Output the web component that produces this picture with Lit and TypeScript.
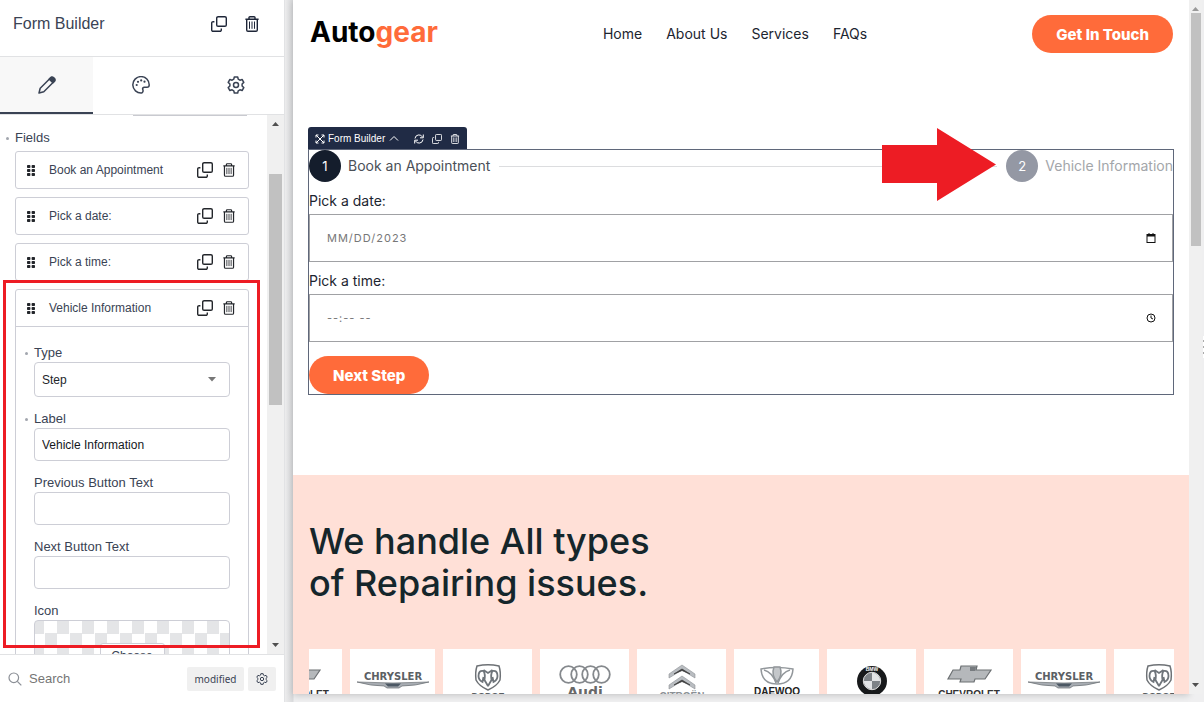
import { LitElement, html, css, svg } from "lit";
import { customElement } from "lit/decorators.js";

const copyIcon = html`<svg class="copy" viewBox="0 0 16 16" fill="none" stroke="currentColor" stroke-width="1.4" stroke-linejoin="round"><rect x="5.7" y=".7" width="9.6" height="9.6" rx="1.4"/><path d="M3.4 5.7H2.1A1.4 1.4 0 0 0 .7 7.1v6.8a1.4 1.4 0 0 0 1.4 1.4h6.8a1.4 1.4 0 0 0 1.4-1.4v-1.3"/></svg>`;
const trashIcon = html`<svg class="trash" viewBox="0 0 14 16" fill="none" stroke="currentColor" stroke-width="1.4"><path d="M.4 3.2h13.2M4 3V1.6A.9.9 0 0 1 4.9.7h4.2a.9.9 0 0 1 .9.9V3M1.7 3.4V14a1.3 1.3 0 0 0 1.3 1.3h8a1.3 1.3 0 0 0 1.3-1.3V3.4"/><path stroke-width="1" d="M4.5 5.5v7.3M7 5.5v7.3M9.5 5.5v7.3"/></svg>`;
const gearIcon = html`<svg class="gear" viewBox="0 0 18 18" fill="none" stroke="currentColor" stroke-width="1.5" stroke-linejoin="round"><path d="M7.3 1h3.4l.5 2.2 1.7 1 2.2-.7 1.7 2.9-1.7 1.6v2l1.7 1.6-1.7 2.9-2.2-.7-1.7 1-.5 2.2H7.3l-.5-2.2-1.7-1-2.2.7-1.7-2.9L2.9 10V8L1.2 6.4l1.7-2.9 2.2.7 1.7-1z"/><circle cx="9" cy="9" r="2.5"/></svg>`;

const logos: Record<string, unknown> = {
  chrysler: svg`<text x="44" y="31" font-size="10" font-weight="700" text-anchor="middle" class="wide">CHRYSLER</text><path d="M8 33q36 2 72 0-14 4-27 4l-3 2H38l-3-2Q22 37 8 33z" fill="#a8adb3" stroke="#666b70" stroke-width=".7"/><path d="M36 34.5h16l-3 3H39z" fill="#4c5864"/>`,
  dodge: svg`<path d="M33 17q11-2.500 22 0 2 6 1 14-3 6-12 10-9-4-12-10-1-8 1-14z" fill="none" stroke="#6d7175" stroke-width="1.500"/><path d="M44 37l-3.500-6q1-6-1-9-5-1-5 5 0 4 4 6l1-5m4.500 9l3.500-6q-1-6 1-9 5-1 5 5 0 4-4 6l-1-5M39.500 21l4.500 3 4.500-3" fill="none" stroke="#6f757b" stroke-width="1.800"/><text x="44" y="50" text-anchor="middle" font-size="9" font-weight="700">DODGE</text>`,
  audi: svg`<g fill="none" stroke="#85898d" stroke-width="1.800"><circle cx="27.500" cy="25.500" r="8.300"/><circle cx="38.500" cy="25.500" r="8.300"/><circle cx="49.500" cy="25.500" r="8.300"/><circle cx="60.500" cy="25.500" r="8.300"/></g><text x="44" y="48" text-anchor="middle" font-size="14" font-weight="700" class="wide" fill="#686868">Audi</text>`,
  citroen: svg`<path d="M31 29v-4l13-9 13 9v4l-13-8zM31 40v-4l13-9 13 9v4l-13-8z" fill="#b9bdc1" stroke="#8d9196" stroke-width=".6"/><path d="M36 25l8-5 8 5-8-3.500zM36 36l8-5 8 5-8-3.500z" fill="#333" stroke="#444" stroke-width=".8"/><text x="44" y="51" text-anchor="middle" font-size="10" font-weight="700" class="soft">CITROËN</text>`,
  daewoo: svg`<g fill="none" stroke="#92979b" stroke-width="1.500"><path d="M28 20q16-3 32 0-1 15-16 15T28 20z"/><path d="M31 21q8 2 12 13M57 21q-8 2-12 13"/><path d="M41 18q-3 8 3 15 6-7 3-15z" fill="#c4c7ca"/></g><text x="44" y="46" text-anchor="middle" font-size="10" font-weight="700" fill="#222">DAEWOO</text>`,
  bmw: svg`<circle cx="44" cy="32" r="15" fill="#17191b"/><circle cx="44" cy="32" r="8.700" fill="#7d8287" stroke="#ddd"/><path d="M44 32v-8.200a8.200 8.200 0 0 1 8.200 8.200zM44 32v8.200a8.200 8.200 0 0 1-8.200-8.200z" fill="#e2e4e6"/><text x="44" y="22" text-anchor="middle" font-size="5" font-weight="700" fill="#fff">BMW</text>`,
  chevrolet: svg`<path d="M36 17h16l-1 4h15l-6 9H50l-1 3H35l1-3H23l5-9h7z" fill="#b5b8bb" stroke="#6c7073" stroke-width="1.200"/><path d="M45 18h6l-1 4h-5z" fill="#777b7f"/><text x="44" y="49" text-anchor="middle" font-size="10" font-weight="700" fill="#333">CHEVROLET</text>`,
};

@customElement("app-root")
export class AppRoot extends LitElement {
  static styles = css`
    * { box-sizing: border-box; }
    :host { display: flex; position: relative; height: 100vh; overflow: hidden; background: #efeff0; font-family: "Liberation Sans", Arial, sans-serif; color: #3a4354; }
    svg { display: block; flex: none; }
    button { font: inherit; color: inherit; border: 0; background: none; padding: 0; cursor: pointer; }
    input, select { font: inherit; }
    h1, h2, ul { margin: 0; padding: 0; font-weight: 400; list-style: none; }
    .copy { width: 16px; height: 16px; }
    .trash { width: 14px; height: 16px; }
    .gear { width: 18px; height: 18px; }

    .sidebar { flex: none; width: 285px; display: flex; flex-direction: column; background: #fff; border-right: 1px solid #e2e3e5; }
    .title { flex: none; height: 57px; display: flex; align-items: center; gap: 18px; padding: 0 25px 8px 13px; border-bottom: 1px solid #e1e2e4; color: #1e2638; }
    .title h1 { flex: 1; font-size: 16px; line-height: 20px; color: #3a4354; }
    .tabs { flex: none; display: grid; grid-template-columns: 93px 1fr 1fr; height: 58px; border-bottom: 1px solid #e1e2e4; }
    .tab { display: grid; place-items: center; border-bottom: 2px solid transparent; }
    .tab.on { background: #f8f8f8; border-bottom-color: #3a4354; }
    .scroller { flex: 1; min-height: 0; display: flex; }
    .fields { flex: 1; min-width: 0; overflow: hidden; padding: 0 18px 0 15px; }
    .above { width: 114px; height: 1px; margin-left: 118px; background: #c9cad0; }
    .dotted::before { content: ""; position: absolute; left: -9px; top: 7px; width: 3px; height: 3px; border-radius: 50%; background: #a2a6ae; }
    .label { display: block; position: relative; font-size: 13px; line-height: 16px; }
    .fields h2 { margin: 14px 0 5px; }
    .cards { display: flex; flex-direction: column; gap: 8px; }
    .card { border: 1px solid #cdced6; border-radius: 3px; }
    .head { height: 36px; display: flex; align-items: center; padding: 0 13px 0 11px; font-size: 12px; color: #23262b; }
    .grip { width: 8px; height: 11px; }
    .name { flex: 1; margin-left: 14px; color: #3a4354; }
    .head .trash { width: 12px; height: 14px; }
    .head button + button { margin-left: 10px; }
    .body { border-top: 1px solid #cdced6; padding: 18px 18px 0; }
    .body .label { margin-bottom: 1px; }
    .control { display: block; width: 100%; height: 33px; margin-bottom: 14px; padding: 0 7px; border: 1px solid #cdced6; border-radius: 4px; background: #fff; font-size: 12px; color: #15171c; outline: 0; }
    .pick { position: relative; margin-bottom: 14px; }
    .pick .control { height: 35px; margin: 0; appearance: none; color: #23262b; }
    .caret { position: absolute; right: 14px; top: 15px; width: 8px; height: 5px; color: #777; pointer-events: none; }
    .checker { height: 80px; display: flex; justify-content: center; align-items: flex-start; padding-top: 22px; border: 1px solid #cdced6; border-radius: 4px; background: conic-gradient(#fff 25%, #e4e5e7 0 50%, #fff 0 75%, #e4e5e7 0) -3px 0 / 25px 25px; }
    .choose { width: 65px; height: 26px; border: 1px solid #cdced6; border-radius: 3px; background: #fff; font-size: 12px; }
    .bar { flex: none; display: flex; flex-direction: column; background: #f0f0f0; color: #505050; align-items: center; }
    .side { width: 17px; }
    .bar svg { width: 7px; height: 4px; margin: 7px 0; }
    .thumb { width: 13px; background: #c1c1c1; }
    .side .thumb { height: 231px; margin: 41px 0 auto; }
    .search { flex: none; height: 48px; display: flex; align-items: center; gap: 4px; padding: 0 8px; border-top: 1px solid #e1e2e4; font-size: 13px; }
    .search input { flex: 1; min-width: 0; border: 0; outline: 0; padding: 0 0 0 3px; }
    .search input::placeholder { color: #757575; }
    .search > svg { width: 14px; height: 14px; color: #8b8f96; }
    .chip { height: 24px; background: #f0f0f0; border-radius: 2px; font: 10px "Noto Sans", sans-serif; width: 57px; }
    .chip.sq { width: 28px; display: grid; place-items: center; }
    .chip .gear { width: 12px; height: 12px; }

    .stage { flex: 1; min-width: 0; display: flex; padding: 0 2px 8px 8px; background: linear-gradient(90deg, #ececed, #d9dadc 8px, #efeff0 9px); }
    .page { flex: 1; min-width: 0; background: #fff; overflow: hidden; font-family: Inter, "Open Sans", sans-serif; color: #1c2530; box-shadow: 0 1px 7px #0003; }
    .view { width: 13px; }
    .view .thumb { width: 10px; height: 233px; margin: -5px 0 auto; }
    .view svg:first-child { color: #999; }
    .nav { display: flex; align-items: center; justify-content: space-between; padding: 15px 16px 0 17px; height: 53px; }
    .brand { font-size: 28px; line-height: 32px; font-weight: 700; color: #000; text-decoration: none; margin-bottom: 4px; }
    .brand span { color: #ff6b3a; }
    .links { display: flex; gap: 24px; font-size: 14px; line-height: 16px; }
    .links a { color: inherit; text-decoration: none; }
    .cta { height: 38px; border-radius: 19px; padding: 0 24px; background: #ff6b3a; color: #fff; font-size: 15px; font-weight: 800; }
    .builder { margin: 74px 15px 80px; }
    .tools { width: 159px; height: 22px; display: flex; align-items: center; padding: 1px 7px 0; background: #202b45; color: #fff; border-radius: 3px 3px 0 0; font: 10px "Liberation Sans", sans-serif; }
    .tools svg { height: 10px; width: 10px; }
    .tools span { margin: 0 4px 0 3px; white-space: nowrap; }
    .tools button { margin-left: 8px; }
    .tools button:first-of-type { margin-left: 15px; }
    .form { border: 1px solid #5f677a; }
    .steps { display: flex; align-items: center; height: 32px; font-size: 14px; line-height: 16px; white-space: nowrap; color: #4b5058; }
    .num { flex: none; display: grid; place-items: center; width: 32px; height: 32px; border-radius: 50%; margin-right: 7px; background: #141d2c; color: #fff; font-size: 13px; }
    .rule { flex: 1; height: 1px; margin: 0 9px; background: #dcdddf; }
    .off { color: #a3a6aa; }
    .num.off { background: #9498a4; color: #fff; }
    .form > label { display: block; font-size: 14px; line-height: 16px; margin: 11px 0 5px; }
    .entry { display: flex; align-items: center; height: 48px; padding: 0 16px 0 17px; border: 1px solid #a0a1a4; }
    .entry input { flex: 1; min-width: 0; border: 0; outline: 0; padding: 0; background: none; font-size: 11px; letter-spacing: 1px; }
    .entry input::placeholder { color: #777; }
    .entry svg { width: 10px; height: 10px; color: #111; }
    .next { display: block; margin-top: 14px; }
    .promo { background: #ffe0d7; padding: 45px 15px 0 16px; }
    .promo h2 { font-size: 36px; line-height: 42px; font-weight: 500; color: #15262b; }
    .strip { display: flex; gap: 8px; margin-top: 45px; overflow: hidden; }
    .tile { flex: none; width: 89px; height: 88px; background: #fff; display: grid; place-items: center; }
    .tile:first-child { margin-left: -56px; }
    .tile.slim { width: 85px; }
    .tile svg { width: 88px; height: 88px; margin: 0 -2px; fill: #5b6064; font-family: "Liberation Sans", sans-serif; }
    .tile .soft { fill: #8b9095; }
    .tile .wide { font-family: "DejaVu Sans", sans-serif; }

    .frame { position: absolute; left: 3px; top: 280px; width: 257px; height: 368px; border: 3px solid #ed1c24; pointer-events: none; }
    .arrow { position: absolute; left: 882px; top: 128px; width: 114px; height: 73px; pointer-events: none; }
    .handle { position: absolute; right: 0; top: 336px; width: 1px; height: 22px; background: repeating-linear-gradient(#fff 0 4px, #aaa 4px 6px); }
  `;

  private card(name: string, body: unknown = "") {
    return html`<li class="card">
      <div class="head">
        <svg class="grip" viewBox="0 0 8 11" fill="currentColor"><rect width="3.4" height="3" rx=".8"/><rect x="4.6" width="3.4" height="3" rx=".8"/><rect y="4" width="3.4" height="3" rx=".8"/><rect x="4.6" y="4" width="3.4" height="3" rx=".8"/><rect y="8" width="3.4" height="3" rx=".8"/><rect x="4.6" y="8" width="3.4" height="3" rx=".8"/></svg>
        <span class="name">${name}</span>
        <button aria-label="Duplicate">${copyIcon}</button><button aria-label="Delete">${trashIcon}</button>
      </div>${body}
    </li>`;
  }

  private up = html`<svg viewBox="0 0 7 4" fill="currentColor"><path d="M0 4l3.500-4L7 4z"/></svg>`;
  private down = html`<svg viewBox="0 0 7 4" fill="currentColor"><path d="M0 0l3.500 4L7 0z"/></svg>`;

  render() {
    const brands = ["chevrolet", "chrysler", "dodge", "audi", "citroen", "daewoo", "bmw", "chevrolet", "chrysler", "dodge"];
    const slim = ["chrysler", "daewoo"];
    return html`
      <aside class="sidebar">
        <header class="title"><h1>Form Builder</h1><button aria-label="Duplicate">${copyIcon}</button><button aria-label="Delete">${trashIcon}</button></header>
        <nav class="tabs">
          <button class="tab on" aria-label="Content"><svg width="18" height="18" viewBox="0 0 18 18" fill="none" stroke="currentColor" stroke-width="1.5" stroke-linejoin="round"><path d="M1 17l1.200-4.800L12.700 1.700a1.700 1.700 0 0 1 2.400 0l1.200 1.200a1.700 1.700 0 0 1 0 2.400L5.800 15.800z"/><path fill="currentColor" d="M11.300 3.100l1.900-1.700h2l1.500 1.500v2l-1.800 1.800z"/></svg></button>
          <button class="tab" aria-label="Style"><svg width="18" height="18" viewBox="0 0 18 18" fill="none" stroke="currentColor" stroke-width="1.5"><path d="M9.500 17A8.200 8.200 0 1 1 17.200 9c0 1.700-.9 2.300-2.200 2.300h-2.600c-1.500 0-2.100 1.100-1.600 2.300.6 1.600 0 3.300-1.300 3.400z"/><g fill="currentColor" stroke="none"><circle cx="4.700" cy="9" r="1.100"/><circle cx="6" cy="5.800" r="1.100"/><circle cx="9.200" cy="4.400" r="1.100"/><circle cx="12.500" cy="5.700" r="1.100"/></g></svg></button>
          <button class="tab" aria-label="Settings">${gearIcon}</button>
        </nav>
        <div class="scroller">
          <div class="fields">
            <div class="above"></div>
            <h2 class="label dotted">Fields</h2>
            <ul class="cards">
              ${this.card("Book an Appointment")}${this.card("Pick a date:")}${this.card("Pick a time:")}
              ${this.card("Vehicle Information", html`<div class="body">
                <label class="label dotted" for="type">Type</label>
                <div class="pick"><select class="control" id="type"><option>Step</option></select><svg class="caret" viewBox="0 0 8 5" fill="currentColor"><path d="M0 0h8L4 4.500z"/></svg></div>
                <label class="label dotted" for="lab">Label</label>
                <input class="control" id="lab" .value=${"Vehicle Information"}>
                <label class="label" for="prev">Previous Button Text</label>
                <input class="control" id="prev">
                <label class="label" for="next">Next Button Text</label>
                <input class="control" id="next">
                <div class="label">Icon</div>
                <div class="checker"><button class="choose">Choose</button></div>
              </div>`)}
            </ul>
          </div>
          <div class="bar side">${this.up}<div class="thumb"></div>${this.down}</div>
        </div>
        <footer class="search">
          <svg viewBox="0 0 14 14" fill="none" stroke="currentColor" stroke-width="1.2"><circle cx="5.800" cy="5.800" r="4.800"/><path d="M9.300 9.300L13.300 13.300"/></svg>
          <input aria-label="Search" placeholder="Search">
          <button class="chip">modified</button><button class="chip sq" aria-label="Settings">${gearIcon}</button>
        </footer>
      </aside>
      <div class="stage">
        <main class="page">
          <header class="nav">
            <a class="brand" href="#">Auto<span>gear</span></a>
            <nav class="links">${["Home", "About Us", "Services", "FAQs"].map((l) => html`<a href="#">${l}</a>`)}</nav>
            <button class="cta">Get In Touch</button>
          </header>
          <section class="builder">
            <div class="tools">
              <svg viewBox="0 0 10 10" fill="none" stroke="currentColor"><path d="M1 3.500V1h2.500M6.500 1H9v2.500M9 6.500V9H6.500M3.500 9H1V6.500M1 1l8 8M9 1L1 9"/></svg>
              <span>Form Builder</span>
              <svg viewBox="0 0 10 10" fill="none" stroke="currentColor"><path d="M1 6.500L5 2.500 9 6.500"/></svg>
              <button aria-label="Refresh"><svg viewBox="0 0 10 10" fill="none" stroke="currentColor"><path d="M1 4.500A4 4 0 0 1 8.500 3M9.300.5v3.300H6M9 5.500A4 4 0 0 1 1.500 7M.7 9.500V6.200H4"/></svg></button>
              <button aria-label="Duplicate">${copyIcon}</button><button aria-label="Delete">${trashIcon}</button>
            </div>
            <div class="form">
              <div class="steps"><span class="num">1</span><span>Book an Appointment</span><i class="rule"></i><span class="num off">2</span><span class="off">Vehicle Information</span></div>
              <label for="date">Pick a date:</label>
              <div class="entry"><input id="date" placeholder="MM/DD/2023"><svg viewBox="0 0 10 10" fill="none" stroke="currentColor"><rect x="1" y="1.5" width="8" height="8"/><path stroke-width="2" d="M1 2.500h8"/><path d="M3 0v2M7 0v2"/></svg></div>
              <label for="time">Pick a time:</label>
              <div class="entry"><input id="time" placeholder="--:-- --"><svg viewBox="0 0 10 10" fill="none" stroke="currentColor"><circle cx="5" cy="5" r="4"/><path d="M5 2.500V5l2 1"/></svg></div>
              <button class="cta next">Next Step</button>
            </div>
          </section>
          <section class="promo">
            <h2>We handle All types<br>of Repairing issues.</h2>
            <div class="strip">${brands.map((b) => html`<div class="tile ${slim.includes(b) ? "slim" : ""}"><svg viewBox="0 0 88 88" role="img" aria-label=${b}>${logos[b]}</svg></div>`)}</div>
          </section>
        </main>
        <div class="bar view">${this.up}<div class="thumb"></div>${this.down}</div>
      </div>
      <div class="frame"></div>
      <svg class="arrow" viewBox="0 0 114 73"><path d="M0 17h55V0l59 36.500L55 73V55H0z" fill="#ed1c24"/></svg>
      <div class="handle"></div>
    `;
  }
}
